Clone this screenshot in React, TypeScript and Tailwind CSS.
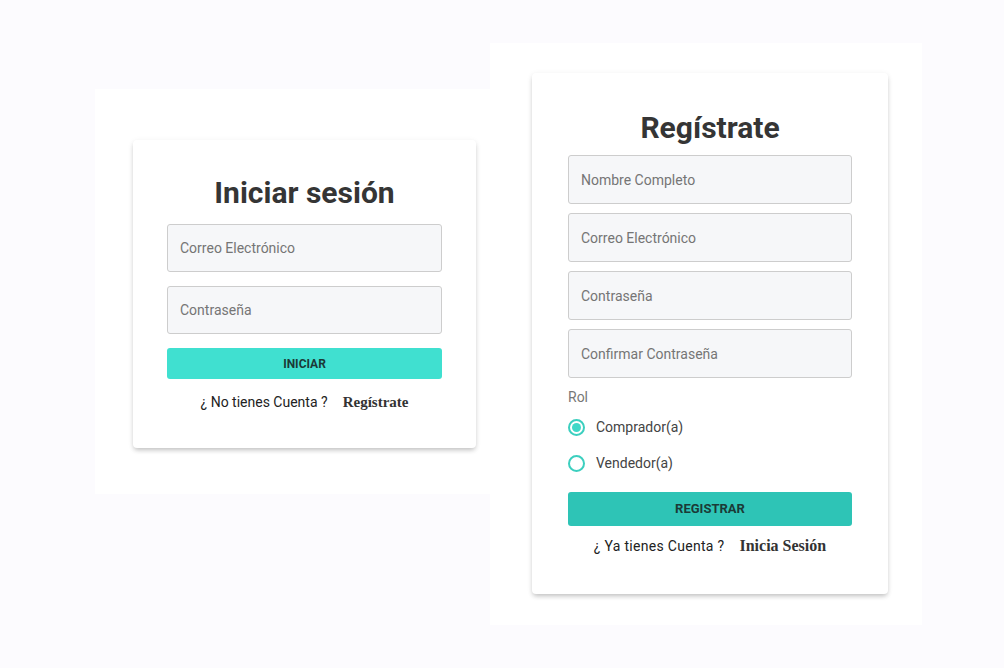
import { useState } from "react";

function Field({ placeholder, type = "text", h }: { placeholder: string; type?: string; h: string }) {
  return (
    <input
      type={type}
      placeholder={placeholder}
      className={`${h} w-full rounded-[3px] border border-[#cdcdcd] bg-[#f6f7f9] px-[12px] text-[14px] text-[#333] outline-none placeholder:text-[#757575]`}
    />
  );
}

function Footer({ question, link, big }: { question: string; link: string; big?: boolean }) {
  return (
    <p className="flex items-center justify-center gap-[15px] leading-5">
      <span className={big ? "text-[14px] tracking-[0.3px] text-[#222]" : "text-[14px] text-[#222]"}>{question}</span>
      <a
        href="#"
        className={
          big
            ? "font-['Liberation_Serif',serif] text-[16px] font-bold text-[#333]"
            : "font-['Liberation_Serif',serif] text-[15px] font-bold text-[#333]"
        }
      >
        {link}
      </a>
    </p>
  );
}

function LoginCard() {
  return (
    <div className="w-[343px] rounded-[4px] bg-white px-[34px] pt-[36px] pb-[36px] shadow-[0_3px_5px_-1px_rgba(0,0,0,0.22),0_1px_6px_0_rgba(0,0,0,0.06)]">
      <h1 className="text-center text-[30px] leading-[34px] font-bold text-[#353535]">Iniciar sesión</h1>
      <div className="mt-[14px] flex flex-col gap-[14px]">
        <Field placeholder="Correo Electrónico" h="h-[48px]" />
        <Field placeholder="Contraseña" type="password" h="h-[48px]" />
        <button className="h-[31px] w-full rounded-[3px] bg-[#40e0d0] text-[12px] font-bold text-[#1b3a37]">
          INICIAR
        </button>
      </div>
      <div className="mt-[13px]">
        <Footer question="¿ No tienes Cuenta ?" link="Regístrate" />
      </div>
    </div>
  );
}

function Radio({ checked, label, onClick }: { checked: boolean; label: string; onClick: () => void }) {
  return (
    <button type="button" onClick={onClick} className="flex h-[24px] items-center gap-[11px]">
      <span className="flex h-[17px] w-[17px] items-center justify-center rounded-full border-2 border-[#3ccfbf]">
        {checked && <span className="h-[9px] w-[9px] rounded-full bg-[#40d8c8]" />}
      </span>
      <span className="text-[14px] text-[#444]">{label}</span>
    </button>
  );
}

function RegisterCard() {
  const [role, setRole] = useState("comprador");
  return (
    <div className="w-[356px] rounded-[4px] bg-white px-[36px] pt-[38px] pb-[38px] shadow-[0_3px_5px_-1px_rgba(0,0,0,0.22),0_1px_6px_0_rgba(0,0,0,0.06)]">
      <h1 className="text-center text-[30px] leading-[34px] font-bold text-[#353535]">Regístrate</h1>
      <div className="mt-[10px] flex flex-col gap-[9px]">
        <Field placeholder="Nombre Completo" h="h-[49px]" />
        <Field placeholder="Correo Electrónico" h="h-[49px]" />
        <Field placeholder="Contraseña" type="password" h="h-[49px]" />
        <Field placeholder="Confirmar Contraseña" type="password" h="h-[49px]" />
      </div>
      <p className="mt-[10px] text-[14px] leading-[18px] text-[#777]">Rol</p>
      <div className="mt-[9px] flex flex-col gap-[12px]">
        <Radio checked={role === "comprador"} label="Comprador(a)" onClick={() => setRole("comprador")} />
        <Radio checked={role === "vendedor"} label="Vendedor(a)" onClick={() => setRole("vendedor")} />
      </div>
      <button className="mt-[17px] h-[34px] w-full rounded-[3px] bg-[#2ec4b6] text-[13px] font-bold text-[#1b3a37]">
        REGISTRAR
      </button>
      <div className="mt-[10px]">
        <Footer question="¿ Ya tienes Cuenta ?" link="Inicia Sesión" big />
      </div>
    </div>
  );
}

export default function App() {
  return (
    <div className="flex h-[668px] w-[1004px] bg-[#fcfbfe] font-['Roboto',sans-serif]">
      <div className="mt-[89px] ml-[95px] h-[405px] w-[395px] bg-white pt-[51px] pl-[38px]">
        <LoginCard />
      </div>
      <div className="mt-[43px] h-[582px] w-[432px] bg-white pt-[30px] pl-[42px]">
        <RegisterCard />
      </div>
    </div>
  );
}
